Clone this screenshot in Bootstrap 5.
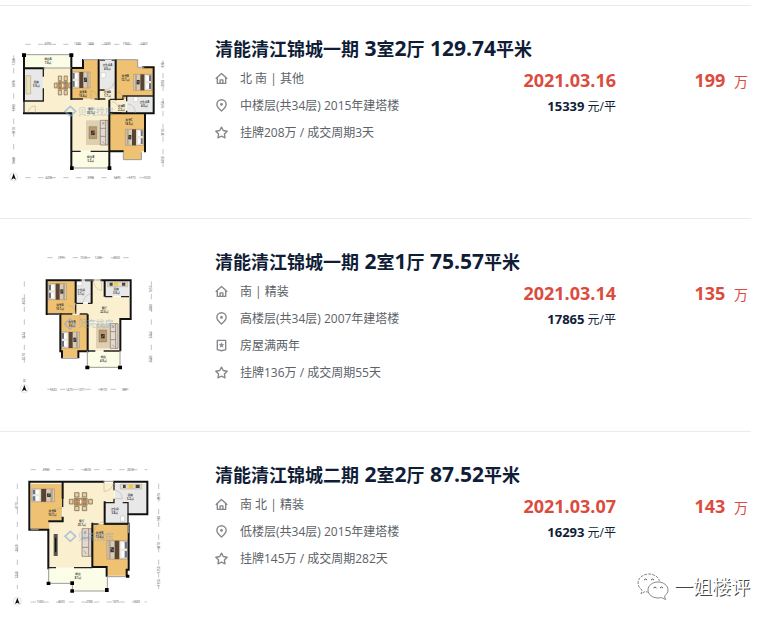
<!DOCTYPE html>
<html lang="zh-CN">
<head>
<meta charset="utf-8">
<meta name="viewport" content="width=device-width, initial-scale=1">
<title>清能清江锦城 成交记录</title>
<link href="https://cdn.jsdelivr.net/npm/bootstrap@5.3.0/dist/css/bootstrap.min.css" rel="stylesheet">
<style>
body{font-family:"Open Sans","Noto Sans CJK SC",sans-serif;background:#fff;color:#101d37}
.deals{padding-top:5px;margin-right:23px}
.deal{border-top:1px solid #ebebeb;padding:24px 0 28px;gap:35px}
.deal:last-child{padding-bottom:0}
.plan{width:180px;flex:none;display:block}
.plan svg{width:100%;height:auto;display:block}
.deal-title{font-size:18px;line-height:26px;margin:5px 0 3px;font-weight:700}
.deal-title a{color:#101d37;text-decoration:none}
.deal-title span{font-size:21px}
.facts{font-size:12px;line-height:27px;color:#5c6268}
.facts li{display:flex;align-items:center;gap:12px}
.facts svg{width:13px;height:13px;flex:none;fill:none;stroke:#85898d;stroke-width:1.5;stroke-linejoin:round}
.figures{line-height:26px;padding-top:2px}
.hot{color:#db4c3f;font-size:18px;font-weight:700}
.hot small{font-size:14px;line-height:14px;font-weight:400;margin-left:4px}
.unit{font-size:12px}
.unit b{font-size:13px}
.total{width:135px;padding-right:3px}
.signature{right:24px;bottom:14px;font-size:19px;line-height:28px;gap:5px;color:#fff;text-shadow:1px 1px 0 #444}
.signature svg{width:32px;height:30px}
.wl{fill:none;stroke:#111;stroke-width:6;stroke-linecap:square}
.tn{fill:none;stroke:#222;stroke-width:4}
.wn{fill:none;stroke:#999;stroke-width:3}
.door{fill:none;stroke:#b5a587;stroke-width:1.5}
.tile{fill:#faf0d0}.wood{fill:#eec173}.wet{fill:#e8e8e8}.balc{fill:#fcfde6}
.lb{font-size:8px;fill:#333;text-anchor:middle;font-weight:700}
.dm{font-size:9px;fill:#555;text-anchor:middle}
.ax{stroke:#888;stroke-width:1.5;fill:none;stroke-dasharray:16 22}
.brand{font-size:27px;fill:#7fa8d8;opacity:.55}
</style>
<script src="https://cdn.jsdelivr.net/npm/bootstrap@5.3.0/dist/js/bootstrap.bundle.min.js"></script>
</head>
<body>
<svg class="d-none" aria-hidden="true">
<symbol id="home" viewBox="0 0 14 14"><path d="M.8 7.2 7 1.5l6.200 5.700M2.500 6v6.300h9V6M5.500 12V8.500h3V12"/></symbol>
<symbol id="pin" viewBox="0 0 14 14"><path d="M7 13C4 10.200 2 8 2 5.800a5 5 0 0 1 10 0C12 8 10 10.200 7 13Z"/><circle cx="7" cy="5.800" r=".8"/></symbol>
<symbol id="star" viewBox="0 0 14 14"><path d="m7 1.200 1.900 3.700 4.200.7-3 3 .7 4.100L7 11l-3.800 1.700.7-4.100-3-3 4.200-.7Z"/></symbol>
<symbol id="badge5" viewBox="0 0 14 14"><path d="M2.500 1.500h9v10L7 12.700l-4.500-1.200Z"/><path d="m7 4 .8 1.700 1.800.2-1.400 1.200.4 1.900L7 8l-1.600 1 .4-1.900-1.400-1.200 1.800-.2Z" fill="#85898d" stroke-width=".4"/></symbol>
<g id="bed"><path fill="#d8cbb8" stroke="#796b59" d="M0 1h54v48H0Z"/><path fill="#eee7db" d="M2 3h18v44H2Z"/><path fill="#66718a" d="M2 4h7v17H2zM2 28h7v17H2z"/><path fill="#fff" d="M8 5h8v16H8zM8 28h8v16H8z"/><path fill="#594333" d="M22 1h12v48H22Z"/><path fill="#b8a58b" d="M44 1h6v48h-6Z"/><path fill="#333" d="M36 18h9v13h-9Z"/><path stroke="#fff" d="m37 28 7-8"/></g>
<g id="sofa"><path fill="#ddcfb1" d="M0 0h42v74H0Z"/><path fill="#b99a6e" stroke="#745534" d="M9 19h23v36H9Z"/><path fill="#333" d="M15 31h11v13H15Z"/><path stroke="#fff" d="m16 41 9-7"/><path fill="#e2dad0" stroke="#7b6c61" stroke-width="2" d="M43 0h23v74H43Zm0 24h16m-16 24h16M59 0v74"/><path stroke="#b27474" stroke-width="2" d="m49 5 6 8m0-8-6 8m0 50 6 7"/></g>
<g id="dining"><path fill="#c79150" stroke="#6d4b27" d="M14 17h40v22H14Z"/><path fill="#e6cda4" stroke="#68543d" stroke-width="2" d="M16 1h13v13H16zM39 1h13v13H39zM16 42h13v13H16zM39 42h13v13H39zM0 21h11v14H0zM58 21h11v14H58z"/><path fill="#7d8791" d="M19 17h8v8h-8zM41 17h8v8h-8zM19 31h8v8h-8zM41 31h8v8h-8z"/><path fill="#fff" d="m34 20 3 8-3 8-3-8Z"/></g>
<g id="north"><circle r="12" fill="#fff" stroke="#aaa"/><path d="M0-11 7 8 0 4-7 8Z" fill="#111"/></g>
<g id="brandmark"><path d="m0-15 16 15L0 15-16 0Z" fill="none" stroke="#7fa8d8" stroke-width="5" opacity=".6"/></g>
</svg>

<main class="position-relative">
<ul class="deals list-unstyled mb-0">
<li class="deal d-flex">
<a class="plan" href="#" aria-label="3室2厅户型图">
<svg viewBox="0 0 540 480">
<path class="tile" d="M130 114h84v-5h114v253H216V248H74v-36h56Z"/>
<path class="balc" d="M74 76h140v38H74Zm142 288h112v50H216Z"/><path class="wet" d="M74 117h55v95H74Zm226-25h46v86h-46Zm81 108h77v48h-77Z"/>
<path class="wood" d="M214 114h35V90h46v116h-81Zm134-24h65v24h46v84h-78v10h-33Zm-18 160h105v114h-10v25h-54v-25h-41Z"/>
<path class="tile" d="M297 180h50v30h-50Zm33 30h50v38h-50Z"/>
<use href="#bed" x="216" y="125"/><use href="#bed" transform="translate(455 132) scale(-1 1)"/><use href="#bed" transform="translate(430 297) scale(-1 1)"/>
<use href="#dining" transform="translate(163 137) scale(.75 1.050)"/><use href="#sofa" x="258" y="271"/>
<path fill="#eadfae" stroke="#777" d="M78 137h14v55H78Z"/><path fill="#fff" stroke="#aaa" d="M303 128h14v15h-14zM401 200h12v15h-12z"/>
<path class="wl" d="M72 76V212M72 250H214V362M72 115H130M214 76V207M214 114H249V90M296 90V207M347 90V208M430 112H461V250H435V364M330 250H435M328 212V412M214 366V414M329 364H368"/>
<path class="tn" d="M130 114v26m0 35v38H72M72 212v38M214 207h35m35 0h32m-20-27h18m15 28h40v-10h92M330 248h35m15-50v16m0 28v8M214 364h28m30 0h57M300 90h15m20 0h12"/>
<path class="wn" d="M72 74h142M249 89h46m4 0h48m3 0h63v23h20M130 114h84m2 300h112M370 389h54M370 367v22m54-22v22"/>
<path class="door" d="M84 248c2-12 10-20 22-20v20M272 182c10 0 20 10 22 25h-22ZM315 180c15-2 24-10 27-24M350 185c10 1 17 8 22 22M384 222c15 3 21 12 22 27M336 215c12 3 18 10 24 20"/>
<path d="M66 70h12v11H66zM208 70h12v11h-12zM210 409h11v11h-11zM323 409h11v11h-11z"/>
<g class="lb"><text x="144" y="91">阳台A</text><text x="144" y="103">7.0㎡</text><text x="109" y="159">厨房</text><text x="109" y="171">5.9㎡</text><text x="249" y="189">卧室A</text><text x="249" y="201">10.4㎡</text><text x="322" y="109">卫生间A</text><text x="322" y="121">4.0㎡</text><text x="376" y="141">卧室B</text><text x="376" y="153">12.1㎡</text><text x="322" y="189">过道A</text><text x="322" y="201">1.7㎡</text><text x="433" y="218">卫生间B</text><text x="433" y="230">4.0㎡</text><text x="364" y="230">过道B</text><text x="364" y="242">2.2㎡</text><text x="273" y="241">客厅</text><text x="273" y="253">35.1㎡</text><text x="387" y="273">卧室C</text><text x="387" y="285">14.9㎡</text><text x="272" y="385">阳台B</text><text x="272" y="397">5.2㎡</text></g>
<use href="#brandmark" x="211" y="244"/><text class="brand" x="233" y="254">贝壳找房</text>
<path class="ax" d="M76 43h380M76 443h380M41 76v340M489 91v322"/>
<g class="dm"><text x="143" y="46">4490</text><text x="232" y="46">1180</text><text x="272" y="46">1460</text><text x="322" y="46">1680</text><text x="378" y="46">1960</text><text x="432" y="46">1460</text><text x="146" y="446">4490</text><text x="272" y="446">3700</text><text x="351" y="446">1470</text><text x="396" y="446">1770</text><text x="441" y="446">1030</text><text transform="translate(44 96)rotate(-90)">1240</text><text transform="translate(44 162)rotate(-90)">3270</text><text transform="translate(44 233)rotate(-90)">1290</text><text transform="translate(44 302)rotate(-90)">3910</text><text transform="translate(44 393)rotate(-90)">1640</text><text transform="translate(492 105)rotate(-90)">870</text><text transform="translate(492 160)rotate(-90)">2850</text><text transform="translate(492 225)rotate(-90)">1650</text><text transform="translate(492 308)rotate(-90)">3810</text><text transform="translate(492 390)rotate(-90)">1490</text></g>
<use href="#north" x="41" y="441"/>
</svg></a>
<div class="flex-grow-1">
<h2 class="deal-title"><a href="#">清能清江锦城一期<span> 3</span>室<span>2</span>厅<span> 129.74</span>平米</a></h2>
<div class="d-flex">
<ul class="facts list-unstyled mb-0 flex-grow-1">
<li><svg><use href="#home"/></svg>北 南 | 其他</li>
<li><svg><use href="#pin"/></svg>中楼层(共34层) 2015年建塔楼</li>
<li><svg><use href="#star"/></svg>挂牌208万 / 成交周期3天</li>
</ul>
<div class="figures text-end"><div class="hot">2021.03.16</div><div class="unit"><b>15339</b> 元/平</div></div>
<div class="figures total text-end"><div class="hot">199 <small>万</small></div></div>
</div></div>
</li>

<li class="deal d-flex">
<a class="plan" href="#" aria-label="2室1厅户型图">
<svg viewBox="0 0 540 480"><g transform="translate(0 6)">
<path class="tile" d="M227 175h48v-68h38v48h75v65h-30v98h-94V206h-37Z"/><path class="balc" d="M262 319h98v48h-98Z"/><path class="wet" d="M227 107h46v65h-46Zm88 2h71v44h-71Z"/><path class="wood" d="M141 109h84v98h-84Zm40 100h82v109h-31v20h-48v-20h-3Z"/>
<use href="#bed" x="145" y="115"/><use href="#bed" x="184" y="260"/><use href="#sofa" x="288" y="236"/>
<path fill="#e6dbc1" stroke="#888" d="M323 111h60v14h-60Z"/><path fill="#e9cd4a" d="M342 112h12v10h-12Z"/><path fill="#444" d="M329 113h9v9h-9zM366 113h10v9h-10Z"/><path fill="#fff" stroke="#aaa" d="M229 110h17v12h-17z"/>
<path class="wl" d="M140 106H242M258 106H278M304 106H392V222H361V316M140 106V207H181V319H186V337M263 211V319H235V337M227 106V172M275 106V172M314 106V152"/>
<path class="tn" d="M181 207h36m22 0h24M227 175h22m15 0h13M315 155h22m26 0h24M227 178v28M262 318h24m25 0h50"/>
<path class="wn" d="M184 340h49M262 367h98m0-50v50m-98-50v50M143 207h38M242 105h62"/>
<path class="door" d="M280 108c5 20 12 27 25 28v-30M227 206c-3-16-10-24-23-24M250 172c2-15 9-23 23-26M239 208c-2 16 8 24 23 27"/>
<path d="M256 362h12v11h-12zM354 362h12v11h-12z"/>
<g class="lb"><text x="180" y="183">卧室A</text><text x="180" y="195">10.1㎡</text><text x="243" y="137">卫生间</text><text x="243" y="149">3.1㎡</text><text x="349" y="135">厨房</text><text x="349" y="147">3.9㎡</text><text x="313" y="192">客厅</text><text x="313" y="204">22.0㎡</text><text x="216" y="235">卧室B</text><text x="216" y="247">9.6㎡</text><text x="310" y="340">阳台</text><text x="310" y="352">4.9㎡</text></g>
<use href="#brandmark" x="210" y="237"/><text class="brand" x="233" y="247">贝壳找房</text>
<path class="ax" d="M142 38h247M142 433h247M73 109v255M454 109v255"/>
<g class="dm"><text x="184" y="41">2771</text><text x="250" y="41">1550</text><text x="294" y="41">1220</text><text x="350" y="41">2350</text><text x="160" y="437">1243</text><text x="208" y="437">1475</text><text x="245" y="437">1071</text><text x="311" y="437">3170</text><text x="374" y="437">987</text><text transform="translate(76 168)rotate(-90)">4027</text><text transform="translate(76 272)rotate(-90)">3273</text><text transform="translate(76 335)rotate(-90)">1570</text><text transform="translate(457 132)rotate(-90)">1657</text><text transform="translate(457 188)rotate(-90)">2180</text><text transform="translate(457 270)rotate(-90)">3763</text><text transform="translate(457 342)rotate(-90)">1585</text><text x="73" y="412">北</text></g>
<use href="#north" x="73" y="431"/></g>
</svg></a>
<div class="flex-grow-1">
<h2 class="deal-title"><a href="#">清能清江锦城一期<span> 2</span>室<span>1</span>厅<span> 75.57</span>平米</a></h2>
<div class="d-flex">
<ul class="facts list-unstyled mb-0 flex-grow-1">
<li><svg><use href="#home"/></svg>南 | 精装</li>
<li><svg><use href="#pin"/></svg>高楼层(共34层) 2007年建塔楼</li>
<li><svg><use href="#badge5"/></svg>房屋满两年</li>
<li><svg><use href="#star"/></svg>挂牌136万 / 成交周期55天</li>
</ul>
<div class="figures text-end"><div class="hot">2021.03.14</div><div class="unit"><b>17865</b> 元/平</div></div>
<div class="figures total text-end"><div class="hot">135 <small>万</small></div></div>
</div></div>
</li>

<li class="deal d-flex">
<a class="plan" href="#" aria-label="2室2厅户型图">
<svg viewBox="0 0 540 480"><g transform="translate(0 -3)">
<path class="tile" d="M188 84h154v58h-29v64h-35v132H148V200h40Z"/><path class="balc" d="M146 340h176v67H217v-22h-71Z"/><path class="wet" d="M344 86h96v92h-56v-33h-40Zm-29 58h68v62h-68Z"/><path class="wood" d="M92 86h94v110h-38v26H92Zm187 121h104v155h-60v-26h-44Z"/>
<use href="#bed" transform="translate(96 101) scale(1.250 .8)"/><use href="#bed" transform="translate(383 256) scale(-1.150 1.150)"/><use href="#dining" x="208" y="112"/>
<path fill="#e2dad0" stroke="#7b6c61" stroke-width="2" d="M246 221h28v83h-28Zm0 28h20m-20 28h20m0-56v83"/><path stroke="#b27474" stroke-width="2" d="m252 227 7 10m0-10-7 10m0 50 7 10"/>
<path fill="#555" d="M161 237h12v66h-12Z"/><path stroke="#111" stroke-width="4" d="M167 248v44"/><path fill="#e6dbc1" stroke="#888" d="M361 87h64v15h-64Z"/><path fill="#e9cd4a" d="M386 88h13v12h-13Z"/><path fill="#444" d="M369 89h8v10h-8zM407 89h12v10h-12Z"/><path fill="#fff" stroke="#999" d="M362 183h12v16h-12z"/>
<path class="wl" d="M88 80H310M342 80H442V178H386M88 80V224H145V340M188 86V128M314 142V206H386V344H380V362M277 206V336H320V362M148 199H188V188"/>
<path class="tn" d="M188 128v28M313 143h31m24 0h16v64M342 80v26m0 25v14M276 207h20m17 0h70M146 338h22m54 0h55"/>
<path class="wn" d="M92 224h24M146 340v45h71v23h105v-43h58M386 206v28M310 79h32"/>
<path class="door" d="M312 84v25c15-1 24-9 28-24M344 106c15 2 22 12 23 25h-23M188 158c-16 1-25 11-28 27M284 227c2-15 10-24 25-26"/>
<path d="M140 380h11v10h-11zM211 379h11v11h-11zM211 403h11v10h-11zM315 399h11v12h-11zM378 359h10v9h-10z"/>
<g class="lb"><text x="157" y="170">卧室A</text><text x="157" y="182">10.7㎡</text><text x="245" y="200">客厅</text><text x="245" y="212">25.1㎡</text><text x="391" y="124">厨房</text><text x="391" y="136">5.2㎡</text><text x="344" y="164">卫生间</text><text x="344" y="176">3.8㎡</text><text x="299" y="237">卧室B</text><text x="299" y="249">13.4㎡</text><text x="234" y="359">阳台</text><text x="234" y="371">8.1㎡</text></g>
<use href="#brandmark" x="211" y="244"/><text class="brand" x="233" y="254">贝壳找房</text>
<path class="ax" d="M92 44h350M92 441h348M52 86v316M476 86v316"/>
<g class="dm"><text x="138" y="47">2700</text><text x="263" y="47">4500</text><text x="391" y="47">2820</text><text x="120" y="444">1580</text><text x="184" y="444">2030</text><text x="269" y="444">2985</text><text x="347" y="444">1875</text><text x="410" y="444">1593</text><text transform="translate(55 152)rotate(-90)">4170</text><text transform="translate(55 279)rotate(-90)">3930</text><text transform="translate(55 360)rotate(-90)">1230</text><text transform="translate(479 125)rotate(-90)">2870</text><text transform="translate(479 190)rotate(-90)">980</text><text transform="translate(479 272)rotate(-90)">3870</text><text transform="translate(479 345)rotate(-90)">1250</text><text transform="translate(479 383)rotate(-90)">1350</text></g>
<use href="#north" x="52" y="439"/></g>
</svg></a>
<div class="flex-grow-1">
<h2 class="deal-title"><a href="#">清能清江锦城二期<span> 2</span>室<span>2</span>厅<span> 87.52</span>平米</a></h2>
<div class="d-flex">
<ul class="facts list-unstyled mb-0 flex-grow-1">
<li><svg><use href="#home"/></svg>南 北 | 精装</li>
<li><svg><use href="#pin"/></svg>低楼层(共34层) 2015年建塔楼</li>
<li><svg><use href="#star"/></svg>挂牌145万 / 成交周期282天</li>
</ul>
<div class="figures text-end"><div class="hot">2021.03.07</div><div class="unit"><b>16293</b> 元/平</div></div>
<div class="figures total text-end"><div class="hot">143 <small>万</small></div></div>
</div></div>
</li>
</ul>
<div class="signature position-absolute d-flex align-items-center">
<svg viewBox="0 0 32 30" fill="#fff" stroke="#888" stroke-width="1" aria-hidden="true"><path stroke-dasharray="3 1" d="M12 20c-1.500 0-3 0-4-.5L4 22l1-4C2.500 16 1 13.500 1 11c0-5 5-9 11-9 5 0 9.500 3 10.500 7"/><path d="M21 10c5.500 0 10 3.500 10 8 0 2.500-1.500 4.500-3.500 6l1 3.500-4-2c-1 .3-2.300.5-3.500.5-5.500 0-10-3.500-10-8s4.500-8 10-8Z"/><path d="M7 8q1.500-2 3 0M14 8q1.500-2 3 0M16.500 16q1.500-2 3 0M23 16q1.500-2 3 0" fill="none" stroke="#555"/></svg>
<span>一姐楼评</span></div>
</main>
</body>
</html>
